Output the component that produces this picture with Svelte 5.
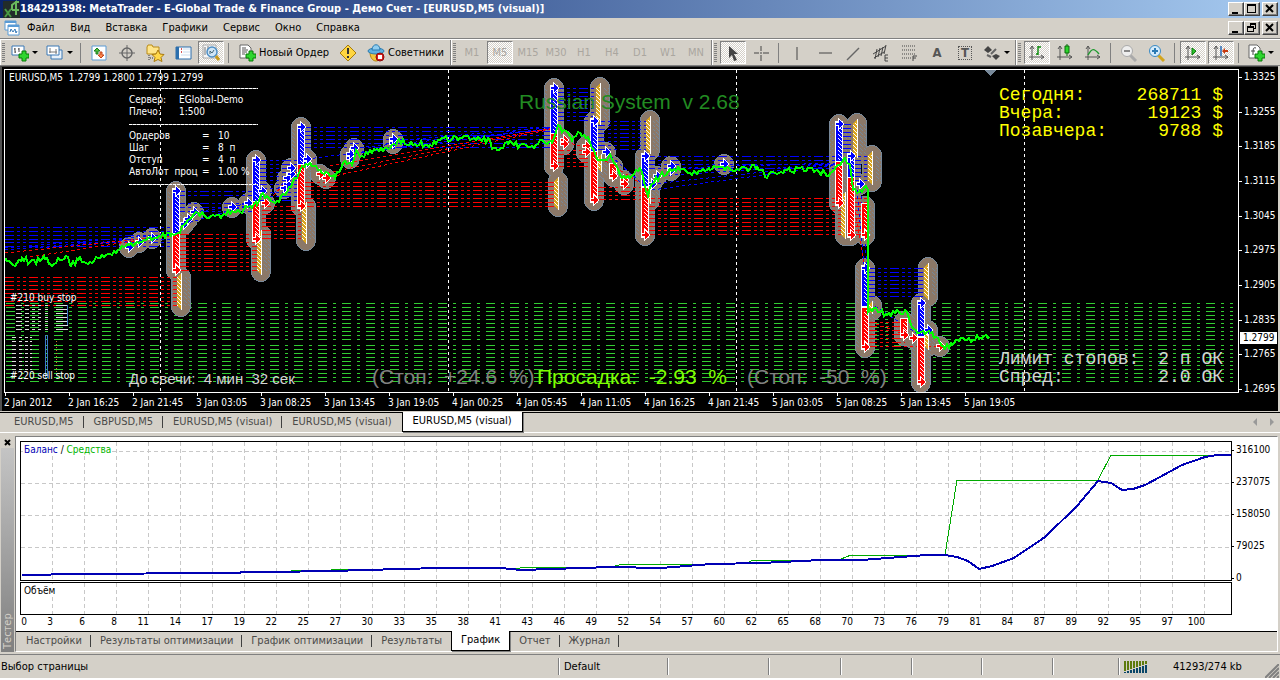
<!--
  Terminal main window: title bar, menu, toolbars, visual tester chart,
  tester report panel and status bar.
-->
<script lang="ts">
  type Row = [color: string, x1: number, x2: number, ys: number[]]
  type Column = [kind: string, x: number, y1: number, y2: number]
  type Point = [number, number]

  const menu = ['Файл', 'Вид', 'Вставка', 'Графики', 'Сервис', 'Окно', 'Справка']
  const periods = ['M1', 'M5', 'M15', 'M30', 'H1', 'H4', 'D1', 'W1', 'MN']
  const prices = ['1.3325', '1.3255', '1.3185', '1.3115', '1.3045', '1.2975', '1.2905', '1.2835', '1.2765', '1.2695']
  const times = [
    '2 Jan 2012', '2 Jan 16:25', '2 Jan 21:45', '3 Jan 03:05', '3 Jan 08:25', '3 Jan 13:45',
    '3 Jan 19:05', '4 Jan 00:25', '4 Jan 05:45', '4 Jan 11:05', '4 Jan 16:25', '4 Jan 21:45',
    '5 Jan 03:05', '5 Jan 08:25', '5 Jan 13:45', '5 Jan 19:05',
  ]
  const chartTabs = ['EURUSD,M5', 'GBPUSD,M5', 'EURUSD,M5 (visual)', 'EURUSD,M5 (visual)', 'EURUSD,M5 (visual)']
  const testerTabs = ['Настройки', 'Результаты оптимизации', 'График оптимизации', 'Результаты', 'График', 'Отчет', 'Журнал']
  const tradeNumbers = [
    0, 3, 6, 8, 11, 14, 17, 19, 22, 25, 27, 30, 33, 35, 38, 41, 43, 46, 49,
    52, 54, 57, 60, 62, 65, 68, 70, 73, 76, 79, 81, 84, 87, 89, 92, 95, 97, 100,
  ]
  const balances = ['316100', '237075', '158050', '79025', '0']
  const details = [
    ['Ордеров', '10'],
    ['Шаг', '8  п'],
    ['Отступ', '4  п'],
    ['АвтоЛот  проц', '1.00 %'],
  ]
  const profits = [
    ['Сегодня:', '268711 $'],
    ['Вчера:', '19123 $'],
    ['Позавчера:', '9788 $'],
  ]
  const limits = [
    ['Лимит стопов:', '2 п ОК'],
    ['Спред:', '2.0 ОК'],
  ]

  let chartTab = $state(4)
  let testerTab = $state(4)
  let period = $state('M5')

  function steps(from: number, to: number, by = 4) {
    const out: number[] = []
    for (let y = from; y <= to; y += by) out.push(y)
    return out
  }

  const pending = [...steps(303, 339), ...steps(345, 381)]

  const levels: Row[] = [
    ['blue', 5, 172, [227, 231, 235, 239, 242, 246]],
    ['red', 5, 177, steps(277, 305)],
    ['blue', 176, 255, [191, 195, 203, 207, 211]],
    ['red', 180, 258, steps(234, 270)],
    ['blue', 258, 302, steps(160, 200)],
    ['red', 262, 303, steps(206, 238)],
    ['blue', 302, 552, steps(127, 147)],
    ['red', 305, 556, steps(182, 206)],
    ['blue', 555, 597, steps(88, 120)],
    ['red', 555, 595, steps(150, 166)],
    ['blue', 596, 648, steps(121, 149)],
    ['red', 597, 645, steps(187, 199)],
    ['blue', 646, 840, steps(156, 168)],
    ['red', 646, 845, steps(198, 234)],
    ['blue', 842, 856, steps(124, 152)],
    ['blue', 852, 870, steps(156, 180)],
    ['red', 852, 868, steps(198, 234)],
    ['blue', 866, 925, steps(268, 296)],
    ['red', 868, 905, steps(322, 342)],
    ['red', 868, 940, [346]],
  ]

  const slopes: [string, number, number, number, number][] = [
    ['blue', 5, 248, 172, 234],
    ['blue', 5, 250, 152, 238],
    ['blue', 40, 248, 139, 241],
    ['red', 5, 253, 170, 236],
    ['red', 30, 257, 140, 240],
    ['blue', 184, 224, 256, 203],
    ['blue', 194, 212, 256, 203],
    ['blue', 232, 207, 256, 201],
    ['blue', 265, 202, 302, 164],
    ['red', 265, 204, 300, 168],
    ['blue', 307, 159, 552, 128],
    ['blue', 350, 154, 552, 128],
    ['blue', 354, 148, 552, 129],
    ['blue', 393, 141, 552, 127],
    ['red', 321, 174, 552, 128],
    ['red', 325, 178, 552, 129],
    ['red', 330, 166, 552, 128],
    ['red', 566, 142, 594, 150],
    ['blue', 606, 152, 645, 186],
    ['red', 585, 148, 645, 186],
    ['blue', 652, 184, 838, 164],
    ['blue', 652, 190, 838, 165],
    ['blue', 657, 176, 838, 164],
    ['blue', 671, 168, 838, 163],
    ['blue', 724, 164, 838, 164],
    ['blue', 860, 184, 867, 264],
    ['blue', 857, 190, 864, 264],
    ['red', 853, 200, 864, 264],
    ['blue', 870, 303, 921, 336],
    ['red', 870, 322, 921, 340],
  ]

  const columns: Column[] = [
    ['gold', 180, 277, 306],
    ['gold', 260, 234, 271],
    ['gold', 305, 206, 240],
    ['gold', 557, 181, 206],
    ['gold', 599, 87, 121],
    ['gold', 649, 120, 150],
    ['gold', 600, 158, 168],
    ['gold', 649, 188, 200],
    ['gold', 844, 196, 235],
    ['gold', 856, 123, 154],
    ['gold', 871, 155, 181],
    ['gold', 871, 305, 310],
    ['gold', 927, 267, 296],
    ['gold', 927, 332, 346],
    ['blue', 176, 191, 232],
    ['red', 176, 236, 270],
    ['blue', 256, 160, 200],
    ['red', 256, 204, 239],
    ['blue', 301, 127, 163],
    ['red', 301, 167, 206],
    ['blue', 554, 88, 132],
    ['red', 554, 136, 166],
    ['blue', 594, 121, 150],
    ['red', 594, 154, 200],
    ['blue', 645, 156, 184],
    ['red', 645, 190, 235],
    ['blue', 839, 124, 160],
    ['red', 839, 164, 203],
    ['blue', 851, 156, 176],
    ['red', 851, 180, 235],
    ['red', 865, 206, 235],
    ['blue', 865, 268, 304],
    ['red', 865, 310, 347],
    ['red', 904, 321, 335],
    ['blue', 921, 303, 334],
    ['red', 921, 340, 382],
    ['blue', 129, 247, 247],
    ['blue', 139, 242, 242],
    ['blue', 152, 238, 238],
    ['blue', 184, 224, 224],
    ['blue', 188, 219, 219],
    ['blue', 194, 212, 212],
    ['blue', 232, 207, 207],
    ['blue', 248, 203, 203],
    ['blue', 262, 191, 191],
    ['red', 265, 203, 203],
    ['blue', 284, 188, 188],
    ['blue', 287, 178, 184],
    ['blue', 291, 168, 174],
    ['blue', 307, 159, 163],
    ['red', 320, 174, 174],
    ['red', 326, 178, 178],
    ['blue', 350, 154, 158],
    ['blue', 354, 148, 148],
    ['blue', 393, 139, 143],
    ['red', 564, 140, 144],
    ['red', 586, 146, 152],
    ['blue', 606, 152, 152],
    ['red', 613, 166, 176],
    ['red', 624, 180, 184],
    ['blue', 652, 184, 184],
    ['blue', 657, 176, 176],
    ['blue', 671, 166, 170],
    ['blue', 724, 164, 164],
    ['blue', 860, 184, 184],
    ['blue', 928, 330, 330],
    ['red', 913, 338, 338],
    ['red', 940, 346, 346],
  ]

  // long columns are drawn as a hatched stack with one whole arrow at the end
  const isStack = ([, , y1, y2]: Column) => y2 - y1 > 9
  const tip = ([kind, , y1, y2]: Column) => (kind === 'red' ? y2 : y1)
  const haloX = ([kind, x]: Column) => (kind === 'gold' ? x + 1 : x)

  const arrow = 'M-3-1H0V-4L4 0 0 4V1H-3z'

  const anchors: Point[] = [
    [5, 258], [13, 265], [22, 258], [30, 262], [40, 261], [45, 259], [50, 264], [60, 260], [68, 257],
    [71, 266], [78, 260], [90, 262], [100, 258], [110, 254], [120, 249], [129, 245], [140, 242],
    [155, 238], [172, 234], [178, 233], [184, 225], [194, 214], [205, 216], [222, 216], [232, 211],
    [240, 212], [250, 206], [257, 205], [263, 193], [273, 202], [285, 195], [295, 178], [302, 166],
    [310, 163], [320, 170], [330, 176], [335, 178], [343, 163], [352, 165], [356, 150], [362, 156],
    [375, 150], [388, 149], [399, 139], [405, 144], [415, 144], [430, 145], [440, 140], [460, 138],
    [480, 139], [490, 140], [492, 149], [497, 150], [508, 144], [530, 147], [543, 141], [552, 143],
    [558, 125], [562, 132], [566, 131], [572, 141], [578, 132], [588, 137], [592, 148], [598, 160],
    [603, 160], [610, 154], [616, 165], [620, 175], [628, 176], [636, 170], [642, 172], [646, 190],
    [648, 196], [652, 184], [660, 176], [668, 172], [680, 170], [695, 172], [710, 170], [723, 167],
    [740, 169], [757, 167], [763, 170], [765, 177], [775, 173], [790, 171], [800, 168], [815, 171],
    [830, 173], [838, 165], [845, 158], [850, 165], [853, 190], [860, 190], [866, 186], [868, 190],
    [868, 312], [876, 308], [887, 315], [895, 313], [907, 312], [912, 327], [917, 333], [930, 333],
    [938, 338], [943, 346], [952, 345], [957, 340], [967, 340], [980, 338], [989, 337],
  ]

  // walk between the anchors in 2px ticks with a small repeatable noise
  function priceLine(points: Point[]) {
    let seed = 7
    const out: string[] = []
    for (let i = 0; i < points.length - 1; i++) {
      const [x1, y1] = points[i]
      const [x2, y2] = points[i + 1]
      out.push(`${x1},${y1}`)
      for (let x = x1 + 2; x < x2; x += 2) {
        seed = (seed * 1103515245 + 12345) % 2147483648
        const noise = Math.round((seed / 2147483648) * 6 - 3)
        out.push(`${x},${Math.round(y1 + ((y2 - y1) * (x - x1)) / (x2 - x1)) + noise}`)
      }
    }
    out.push(points[points.length - 1].join(','))
    return out.join(' ')
  }

  const price = priceLine(anchors)

  const balance =
    '1,133 60,132 190,131 310,129 380,127 420,126 480,126 500,128 560,126 590,125 640,126 690,122 740,121 ' +
    '800,118 840,118 880,115 905,113 924,113 936,115 947,119 958,127 971,124 993,116 1024,95 1056,64 ' +
    '1077,39 1090,41 1101,48 1112,47 1124,43 1139,35 1161,23 1184,15 1196,13 1210,13'
  const equity =
    '1,133 190,131 310,128 420,126 490,127 508,125 590,125 602,122 690,122 725,121 733,118 800,118 ' +
    '820,117 830,113 924,113 936,38 1077,38 1090,13 1200,13'
</script>

{#snippet plus()}
  <path d="M11 7h4v3h3v4h-3v3h-4v-3H8v-4h3z" fill="#2fd52f" stroke="#087a08" />
{/snippet}

{#snippet axes()}
  <path d="M4 2v14M1 13h15M2 5l2-3 2 3M13 11l3 2-3 2" fill="none" stroke="#555" />
{/snippet}

{#snippet minimize()}
  <svg width="10" height="10"><path d="M1 8h6v2H1z" /></svg>
{/snippet}

{#snippet cross()}
  <svg width="10" height="10"><path d="M1 1l7 7M8 1L1 8" stroke="#000" stroke-width="2" /></svg>
{/snippet}

<div class="app">
  <header class="title">
    <svg width="18" height="18" viewBox="0 0 18 18">
      <path d="M1 1h17v17H1z" fill="#222c2a" />
      <path d="M3 9l6 8M9 9l-6 8" stroke="#4a9b45" stroke-width="2" />
      <path d="M10 10V5l4-3v13M10 10h7M13 2h4" fill="none" stroke="#6abb5d" stroke-width="2" />
    </svg>
    <h1>184291398: MetaTrader - E-Global Trade &amp; Finance Group - Демо Счет - [EURUSD,M5 (visual)]</h1>
    <div class="window-buttons">
      <button aria-label="Свернуть">{@render minimize()}</button>
      <button aria-label="Развернуть">
        <svg width="10" height="10"><path d="M0 0h9v9H0zM1 2v6h7V2z" fill-rule="evenodd" /></svg>
      </button>
      <button class="close" aria-label="Закрыть">{@render cross()}</button>
    </div>
  </header>

  <nav class="menu">
    <svg width="16" height="16" viewBox="0 0 16 16">
      <path d="M1 1h11v9H1z" fill="#fff" stroke="#5a9bd5" />
      <path d="M1 1h11v2H1z" fill="#5a9bd5" />
      <path d="M4 5h11v10H4z" fill="#fff" stroke="#5a9bd5" />
      <path d="M4 5h11v2H4z" fill="#5a9bd5" />
      <path d="M6 12l1-3 2 3 2-3 1 4 1-2" fill="none" stroke="#3579b8" />
    </svg>
    {#each menu as item (item)}
      <button class="menu-item">{item}</button>
    {/each}
    <div class="window-buttons">
      <button aria-label="Свернуть окно">{@render minimize()}</button>
      <button aria-label="Восстановить окно">
        <svg width="10" height="10">
          <path d="M3 0h6v6H7V5h1V2H4v1H3zM0 3h7v6H0zM1 5v3h5V5z" fill-rule="evenodd" />
        </svg>
      </button>
      <button class="close" aria-label="Закрыть окно">{@render cross()}</button>
    </div>
  </nav>

  <div class="toolbars">
    <div class="band">
      <i class="grip"></i>
      <button class="tool drop" aria-label="Новый график">
        <svg width="18" height="18" viewBox="0 0 18 18">
          <path d="M1 2h12v9H1z" fill="#fff" stroke="#3b78b5" />
          <path d="M4 4v5M3 5h1M4 8h1M8 4v4M7 5h1" stroke="#444" />
          {@render plus()}
        </svg>
        <b class="caret"></b>
      </button>
      <button class="tool drop" aria-label="Профили">
        <svg width="18" height="18" viewBox="0 0 18 18">
          <path d="M5 6h11v9H5z" fill="#e8f1fa" stroke="#3b78b5" />
          <path d="M1 2h12v9H1z" fill="#fff" stroke="#3b78b5" />
          <path d="M4 4v5M3 8h8M10 5v5" stroke="#777" fill="none" />
        </svg>
        <b class="caret"></b>
      </button>
      <i class="sep"></i>
      <button class="tool" aria-label="Обзор рынка">
        <svg width="18" height="18" viewBox="0 0 18 18">
          <path d="M2 2h14v14H2z" fill="#fff" stroke="#5b9bd5" />
          <path d="M7 4l3 3H8v3H6V7H4z" fill="#4cc23c" stroke="#1c7a1c" />
          <path d="M11 14l-3-3h2V8h2v3h2z" fill="#ff8a50" stroke="#c2451c" />
        </svg>
      </button>
      <button class="tool" aria-label="Окно данных">
        <svg width="18" height="18" viewBox="0 0 18 18" fill="none" stroke="#666">
          <circle cx="9" cy="9" r="5" stroke-width="1.4" /><path d="M9 1v16M1 9h16" />
        </svg>
      </button>
      <button class="tool" aria-label="Навигатор">
        <svg width="20" height="18" viewBox="0 0 20 18">
          <path d="M2 3l1-2h4l1 2h6v7H2z" fill="#ffe58a" stroke="#b98b16" />
          <path d="M4 11v6M5 14h3" stroke="#333" stroke-dasharray="1 1" />
          <path d="M13 6l2 4 4 .5-3 3 1 4-4-2-4 2 1-4-3-3 4-.5z" fill="#ffd84a" stroke="#a8780c" />
        </svg>
      </button>
      <button class="tool" aria-label="Терминал">
        <svg width="18" height="18" viewBox="0 0 18 18">
          <path d="M2 3h15v12H2z" fill="#fff" stroke="#2c6fad" />
          <path d="M2 3h3v12H2z" fill="#2c6fad" />
          <path d="M7 5h1M7 8h1" stroke="#c22" stroke-width="1.4" />
          <path d="M9 5h7M9 8h7M7 11h9" stroke="#cde" />
        </svg>
      </button>
      <button class="tool pressed" aria-label="Тестер">
        <svg width="18" height="18" viewBox="0 0 18 18">
          <path d="M1 1h13v13H1z" fill="#f7f7f7" stroke="#aaa" />
          <path d="M3 3v8M6 2v9" stroke="#777" />
          <circle cx="10" cy="8" r="5" fill="#cfe5f6" stroke="#4d8ec4" stroke-width="1.5" />
          <path d="M8 10V7l2 2 2-3" fill="none" stroke="#467" />
          <path d="M14 12l3 4" stroke="#c79a1b" stroke-width="3" />
        </svg>
      </button>
      <i class="sep"></i>
      <button class="tool wide">
        <svg width="18" height="18" viewBox="0 0 18 18">
          <path d="M2 1h8l3 3v10H2z" fill="#fff" stroke="#666" />
          <path d="M4 4h4M4 6h6M4 8h5M4 10h3" stroke="#555" />
          {@render plus()}
        </svg>
        Новый Ордер
      </button>
      <button class="tool" aria-label="Редактор">
        <svg width="18" height="18" viewBox="0 0 18 18">
          <path d="M9 1l8 8-8 8-8-8z" fill="#ffd640" stroke="#a87c0a" />
          <path d="M9 4v6M9 12v2" stroke="#333" stroke-width="2" />
        </svg>
      </button>
      <button class="tool wide">
        <svg width="18" height="18" viewBox="0 0 18 18">
          <path d="M3 8c0 6 3 9 6 9s6-3 6-9z" fill="#f3c53a" stroke="#b5830d" />
          <ellipse cx="9" cy="7" rx="8" ry="3" fill="#5fb0e0" stroke="#2b7bb0" />
          <path d="M5 6c0-7 8-7 8 0z" fill="#8fcdf0" stroke="#2b7bb0" />
          <circle cx="13" cy="13" r="4" fill="#d81e1e" stroke="#8c0d0d" /><path d="M11 11h4v4h-4z" fill="#fff" />
        </svg>
        Советники
      </button>
    </div>

    <div class="band">
      <i class="grip"></i>
      {#each periods as p (p)}
        <button class="tool period" class:pressed={p === period} onclick={() => (period = p)}>{p}</button>
      {/each}
    </div>

    <div class="band">
      <i class="grip"></i>
      <button class="tool pressed" aria-label="Курсор">
        <svg width="18" height="18" viewBox="0 0 18 18"><path d="M5 2l9 8H10l3 6-3 1-2-6-3 3z" fill="#444" /></svg>
      </button>
      <button class="tool" aria-label="Перекрестие">
        <svg width="18" height="18" viewBox="0 0 18 18"><path d="M9 2v5M9 11v6M2 9h5M11 9h6M9 8v2" stroke="#444" /></svg>
      </button>
      <i class="sep"></i>
      <button class="tool" aria-label="Вертикальная линия">
        <svg width="18" height="18" viewBox="0 0 18 18"><path d="M9 3v13" stroke="#444" /></svg>
      </button>
      <button class="tool" aria-label="Горизонтальная линия">
        <svg width="18" height="18" viewBox="0 0 18 18"><path d="M3 9h13" stroke="#444" /></svg>
      </button>
      <button class="tool" aria-label="Трендовая линия">
        <svg width="18" height="18" viewBox="0 0 18 18"><path d="M3 16L15 4" stroke="#666" stroke-width="1.4" /></svg>
      </button>
      <button class="tool" aria-label="Канал">
        <svg width="18" height="18" viewBox="0 0 18 18" stroke="#444">
          <path d="M1 10L14 2M2 14L12 8M5 5L3 15M8 4L6 13M11 3L9 12M14 1l-2 9" />
          <path d="M16 11h-3v6h3M13 14h3" fill="none" />
        </svg>
      </button>
      <button class="tool" aria-label="Линии Фибоначчи">
        <svg width="18" height="18" viewBox="0 0 18 18" stroke="#444">
          <path d="M2 2h14M2 6h14M2 10h14M2 14h9" stroke-dasharray="1 1" />
          <path d="M17 12h-4v5M13 14h3" fill="none" />
        </svg>
      </button>
      <button class="tool letter">A</button>
      <button class="tool letter"><span class="boxed">T</span></button>
      <button class="tool drop" aria-label="Стрелки">
        <svg width="18" height="18" viewBox="0 0 18 18" fill="#444">
          <path d="M5 2l4 4-4 3-4-3zM13 16l-4-4 4-2 4 2z" /><path d="M8 10l5-5M4 11l4 2" stroke="#666" stroke-width="2" />
        </svg>
        <b class="caret"></b>
      </button>
    </div>

    <div class="band last">
      <i class="grip"></i>
      <button class="tool pressed" aria-label="Бары">
        <svg width="18" height="18" viewBox="0 0 18 18">
          {@render axes()}
          <path d="M10 2v9M10 3h3M8 10h2" stroke="#0a8a0a" stroke-width="1.4" />
        </svg>
      </button>
      <button class="tool" aria-label="Свечи">
        <svg width="18" height="18" viewBox="0 0 18 18">
          {@render axes()}
          <path d="M11 0v12" stroke="#0a6a0a" /><path d="M9 2h4v7H9z" fill="#2bd52b" stroke="#0a6a0a" />
        </svg>
      </button>
      <button class="tool" aria-label="Линия">
        <svg width="18" height="18" viewBox="0 0 18 18">
          {@render axes()}
          <path d="M4 11c4-7 6-7 11-1" fill="none" stroke="#1f9a2f" stroke-width="1.4" />
        </svg>
      </button>
      <i class="sep"></i>
      <button class="tool" aria-label="Уменьшить">
        <svg width="18" height="18" viewBox="0 0 18 18">
          <path d="M10 11l6 6" stroke="#aaa" stroke-width="3" />
          <circle cx="7" cy="7" r="5.5" fill="#eee" stroke="#aaa" /><path d="M4 7h6" stroke="#888" stroke-width="2" />
        </svg>
      </button>
      <button class="tool" aria-label="Увеличить">
        <svg width="18" height="18" viewBox="0 0 18 18">
          <path d="M10 11l6 6" stroke="#d3a51c" stroke-width="3" />
          <circle cx="7" cy="7" r="5.5" fill="#d4ebfb" stroke="#3a8ac4" />
          <path d="M4 7h6M7 4v6" stroke="#2a7ab4" stroke-width="2" />
        </svg>
      </button>
      <i class="sep"></i>
      <button class="tool pressed" aria-label="Автопрокрутка">
        <svg width="18" height="18" viewBox="0 0 18 18">
          {@render axes()}
          <path d="M8 4l4 3-4 4z" fill="#2bc52b" stroke="#0a7a0a" />
        </svg>
      </button>
      <button class="tool pressed" aria-label="Сдвиг графика">
        <svg width="18" height="18" viewBox="0 0 18 18">
          {@render axes()}
          <path d="M9 2v10" stroke="#2a6ab4" stroke-width="1.5" />
          <path d="M10 7l3-3v2h3v2h-3v2z" fill="#c8390f" />
        </svg>
      </button>
      <i class="sep"></i>
      <button class="tool drop" aria-label="Индикаторы">
        <svg width="18" height="18" viewBox="0 0 18 18">
          <path d="M2 1h8l3 3v10H2z" fill="#fff" stroke="#666" />
          <path d="M9 4c-3-1-3 1-3 7M4 7h4" fill="none" stroke="#444" />
          {@render plus()}
        </svg>
        <b class="caret"></b>
      </button>
    </div>
  </div>

  <main class="chart">
    <div class="plot">
      <svg class="canvas" shape-rendering="crispEdges">
        <defs>
          <pattern id="scales" width="4" height="4" patternUnits="userSpaceOnUse">
            <path d="M0 0h1v1H0zM1 1h1v1H1zM2 2h1v1H2z" fill="#778899" />
          </pattern>
          <pattern id="ticks" width="4" height="4" patternUnits="userSpaceOnUse">
            <path d="M0 0h1v1H0zM1 1h1v1H1zM2 2h1v1H2zM3 3h1v1H3z" fill="#fff" />
          </pattern>
        </defs>
        <g transform="translate(-5 -70)">
          {#each pending as y (y)}
            <line x1="6" x2="100%" y1={y} y2={y} class="pending" />
          {/each}
          {#each [160, 448, 736, 1024] as x (x)}
            <line x1={x} x2={x} y1="70" y2="392" class="period-line" />
          {/each}
          {#each columns as c}
            <line x1={haloX(c)} x2={haloX(c)} y1={c[2]} y2={c[3] + 1} class="halo" />
          {/each}
          {#each columns as c}
            <line x1={haloX(c)} x2={haloX(c)} y1={c[2]} y2={c[3] + 1} class="halo body" />
          {/each}
          {#each columns as c}
            {#if isStack(c)}
              <rect x={c[1] + 4} y={c[2]} width="6" height={c[3] - c[2]} fill="url(#scales)" />
              <rect x={c[1] - 9} y={c[2]} width="3" height={c[3] - c[2]} fill="url(#scales)" />
            {/if}
          {/each}
          {#each levels as [color, x1, x2, ys]}
            {#each ys as y (y)}
              <line {x1} {x2} y1={y} y2={y} stroke={color} class="level" />
            {/each}
          {/each}
          {#each slopes as [color, x1, y1, x2, y2]}
            <line {x1} {y1} {x2} {y2} stroke={color} class="slope" />
          {/each}
          {#each columns as c}
            {@const [kind, x, y1, y2] = c}
            {#if kind === 'gold'}
              <path d="M{x + 2} {y1 - 4}V{y2 + 4}L{x - 3} {y2}V{y1}z" class="gold" />
              <rect x={x - 3} y={y1} width="4" height={y2 - y1} fill="url(#ticks)" />
              <rect x={x + 1} y={y1 - 4} width="1" height={y2 - y1 + 8} fill="#fff" />
            {:else}
              {#if isStack(c)}
                <rect x={x - 4} y={y1 - 3} width="8" height={y2 - y1 + 6} fill="#fff" />
                <rect x={x - 3} y={y1 - 2} width="6" height={y2 - y1 + 4} class={kind} />
                <rect x={x - 1} y={y1} width="4" height={y2 - y1} fill="url(#ticks)" />
              {:else if y2 > y1}
                <path d={arrow} transform="translate({x} {kind === 'red' ? y1 : y2})" class="mark {kind}" />
              {/if}
              <path d={arrow} transform="translate({x} {tip(c)})" class="mark {kind}" />
            {/if}
          {/each}
          <g class="hidden-orders">
            {#each steps(305, 329, 4) as y (y)}
              <path d="M16 {y}h6m3 0h4m3 0h3m3 0h3m4 0h3m8 0h12" />
            {/each}
            {#each steps(337, 369, 4) as y (y)}
              <path d="M12 {y}h4m3 0h3m3 0h3m2 0h2" />
            {/each}
          </g>
          <path d="M45 335v43M47 335v43M67 305v20" stroke="#3c78c8" />
          <path d="M56 341v34" stroke="#c87828" stroke-dasharray="1 2" />
          <polyline points={price} class="price" />
          <path d="M984 70h12l-6 6z" fill="#778899" />
        </g>
      </svg>

      <p class="quote">EURUSD,M5&nbsp; 1.2799 1.2800 1.2799 1.2799</p>
      <section class="info">
        <hr />
        <dl>
          <dt>Сервер:</dt><dd>EGlobal-Demo</dd>
          <dt>Плечо:</dt><dd>1:500</dd>
        </dl>
        <hr />
        <dl class="details">
          {#each details as [name, value] (name)}
            <dt>{name}</dt><dd>=</dd><dd>{value}</dd>
          {/each}
        </dl>
        <hr />
      </section>
      <h2 class="system">Russian System&nbsp; v 2.68</h2>
      <dl class="stats profits">
        {#each profits as [name, value] (name)}
          <div><dt>{name}</dt><dd>{value}</dd></div>
        {/each}
      </dl>
      <dl class="stats limits">
        {#each limits as [name, value] (name)}
          <div><dt>{name}</dt><dd>{value}</dd></div>
        {/each}
      </dl>
      <p class="order buy">#210 buy stop</p>
      <p class="order sell">#220 sell stop</p>
      <p class="candle">До свечи:&nbsp; 4 мин&nbsp; 32 сек</p>
      <p class="drawdown stop-up">(Стоп:&nbsp; +24.6&nbsp; %)</p>
      <p class="drawdown current">Просадка:&nbsp; -2.93&nbsp; %</p>
      <p class="drawdown stop-down">(Стоп:&nbsp; -50&nbsp; %)</p>
    </div>
    <div class="price-axis">
      {#each prices as p (p)}
        <span>{p}</span>
      {/each}
      <strong class="bid">1.2799</strong>
    </div>
    <div class="time-axis">
      {#each times as t (t)}
        <span>{t}</span>
      {/each}
    </div>
  </main>

  <div class="tabs chart-tabs" role="tablist">
    {#each chartTabs as label, i}
      <button
        role="tab"
        class="tab"
        class:active={i === chartTab}
        aria-selected={i === chartTab}
        onclick={() => (chartTab = i)}
      >
        {label}
      </button>
    {/each}
    <svg class="scroll" width="24" height="10" fill="#999"><path d="M5 1v8L1 5zM18 1v8l4-4z" /></svg>
  </div>

  <section class="tester">
    <aside>
      <button class="hide" aria-label="Закрыть тестер">
        <svg width="7" height="7"><path d="M1 1l5 5M6 1L1 6" stroke="#000" stroke-width="2" /></svg>
      </button>
      <span class="side-title">Тестер</span>
    </aside>
    <div class="panel">
      <div class="report">
        <div class="graph">
          <svg viewBox="0 0 1210 138" preserveAspectRatio="none">
            {#each tradeNumbers.slice(1) as n, i (n)}
              <line x1={32 * i + 31} x2={32 * i + 31} y1="0" y2="138" class="grid" />
            {/each}
            {#each [9, 41, 73, 105] as y (y)}
              <line x1="0" x2="1210" y1={y} y2={y} class="grid" />
            {/each}
            <polyline points={equity} class="equity" />
            <polyline points={balance} class="balance" />
          </svg>
          <p class="legend"><span class="b">Баланс</span> / <span class="e">Средства</span></p>
        </div>
        <div class="scale">
          {#each balances as b (b)}
            <span>{b}</span>
          {/each}
        </div>
        <div class="volume">
          <svg viewBox="0 0 1210 31" preserveAspectRatio="none">
            {#each tradeNumbers.slice(1) as n, i (n)}
              <line x1={32 * i + 31} x2={32 * i + 31} y1="0" y2="31" class="grid" />
            {/each}
          </svg>
          <p class="legend">Объём</p>
        </div>
        <div class="numbers">
          {#each tradeNumbers as n (n)}
            <span>{n}</span>
          {/each}
        </div>
      </div>
      <div class="tabs" role="tablist">
        {#each testerTabs as label, i (label)}
          <button
            role="tab"
            class="tab"
            class:active={i === testerTab}
            aria-selected={i === testerTab}
            onclick={() => (testerTab = i)}
          >
            {label}
          </button>
        {/each}
      </div>
    </div>
  </section>

  <footer class="status">
    <span class="hint">Выбор страницы</span>
    <span class="profile">Default</span>
    <span class="w101"></span>
    <span class="w72"></span>
    <span class="w71"></span>
    <span class="w70"></span>
    <span class="w71"></span>
    <span class="w66"></span>
    <span class="traffic">
      <svg width="24" height="12" shape-rendering="crispEdges">
        {#each [0, 1, 2, 3, 4, 5, 6, 7] as i (i)}
          <rect x={i * 3} y="0" width="2" height={10 - i} fill="#5d7a0c" />
          <rect x={i * 3} y={11 - i} width="2" height={i + 1} fill="#0a4668" />
        {/each}
      </svg>
      41293/274 kb
    </span>
    <svg class="resize" width="14" height="14">
      <path d="M0 14L14 0M4 14L14 4M8 14l6-6M12 14l2-2" stroke="#808080" stroke-width="2" />
    </svg>
  </footer>
</div>

<style>
  :global(body) {
    background: #d4d0c8;
  }
  .app {
    --face: #d4d0c8;
    --shadow: #808080;
    background: var(--face);
    color: #000;
    font: 11px/14px 'DejaVu Sans Condensed', 'DejaVu Sans', sans-serif;
    overflow: hidden;
  }
  .app :is(p, h1, h2, dl, dd) {
    margin: 0;
  }
  button {
    border: 0;
    padding: 0;
    background: none;
    color: inherit;
    font: inherit;
  }
  svg {
    display: block;
    flex: none;
  }

  .title {
    display: flex;
    align-items: center;
    height: 18px;
    padding: 0 2px;
    background: linear-gradient(90deg, #0a246a, #a6caf0);
    color: #fff;
  }
  .title h1 {
    font-size: 11px;
    line-height: 18px;
    font-weight: bold;
    white-space: nowrap;
  }
  .window-buttons {
    display: flex;
    margin-left: auto;
  }
  .window-buttons button {
    display: grid;
    place-items: center;
    box-sizing: border-box;
    width: 16px;
    height: 14px;
    background: var(--face);
    border: 1px solid;
    border-color: #fff #404040 #404040 #fff;
    box-shadow: inset -1px -1px var(--shadow);
  }
  .window-buttons .close {
    margin-left: 2px;
  }
  .menu {
    display: flex;
    align-items: center;
    height: 20px;
    padding: 0 2px 0 4px;
    border-bottom: 1px solid var(--shadow);
  }
  .menu-item {
    padding: 0 8px 0 7px;
  }
  .menu svg + .menu-item {
    padding-right: 9px;
  }

  .toolbars {
    display: flex;
    height: 25px;
    border-top: 1px solid #fff;
    border-bottom: 1px solid var(--shadow);
  }
  .band {
    display: flex;
    align-items: center;
    flex: none;
    padding-right: 1px;
    border-right: 1px solid var(--shadow);
    box-shadow: inset 1px 0 #fff;
  }
  .band.last {
    flex: 1;
    border-right: 0;
  }
  .grip {
    width: 3px;
    height: 19px;
    margin: 0 2px;
    background: repeating-linear-gradient(var(--shadow) 0 1px, var(--face) 1px 2px);
  }
  .sep {
    width: 1px;
    height: 20px;
    margin: 0 4px 0 3px;
    background: var(--shadow);
  }
  .tool {
    display: flex;
    align-items: center;
    justify-content: center;
    box-sizing: border-box;
    width: 28px;
    height: 23px;
    white-space: nowrap;
  }
  .tool.pressed {
    width: 26px;
    margin: 0 1px;
    border: 1px solid;
    border-color: var(--shadow) #fff #fff var(--shadow);
    background: repeating-conic-gradient(#fff 0 25%, var(--face) 0 50%) 0 0 / 2px 2px;
  }
  .tool.drop {
    width: 35px;
    gap: 3px;
  }
  .tool.wide {
    width: auto;
    gap: 3px;
    padding: 0 5px;
  }
  .period {
    color: #aaa69f;
  }
  .letter {
    color: #555;
    font-size: 13px;
    font-weight: bold;
  }
  .boxed {
    padding: 0 2px;
    border: 1px dotted #555;
    line-height: 12px;
  }
  .caret {
    border: 3px solid transparent;
    border-top-color: #000;
    border-bottom: 0;
  }

  .chart {
    display: grid;
    grid-template-columns: 1fr 39px;
    grid-template-rows: 324px 17px;
    padding: 2px 0 1px 2px;
    margin-right: 2px;
    border-left: 2px solid #505050;
    border-top: 1px solid #404040;
    background: #000;
    color: #fff;
    font-size: 10px;
  }
  .plot {
    position: relative;
    min-width: 0;
    border: 1px solid #fff;
    overflow: hidden;
  }
  .canvas {
    width: 100%;
    height: 322px;
  }
  .pending {
    stroke: #32cd32;
    stroke-dasharray: 9 6 3 6;
  }
  .period-line {
    stroke: #fff;
    stroke-dasharray: 3 3;
  }
  .level {
    stroke-dasharray: 9 3 3 3 3 3;
  }
  .slope {
    stroke-dasharray: 3 3;
  }
  .halo {
    stroke: #778899;
    stroke-width: 20px;
    stroke-linecap: round;
  }
  .halo.body {
    stroke: #8b7868;
    stroke-width: 18px;
  }
  .mark {
    stroke: #fff;
    stroke-width: 2px;
    paint-order: stroke;
  }
  .blue {
    fill: #00f;
  }
  .red {
    fill: #f00;
  }
  .gold {
    fill: #daa520;
  }
  .hidden-orders {
    fill: none;
    stroke: #e0e0e0;
  }
  .price {
    fill: none;
    stroke: #0f0;
    stroke-width: 2px;
  }

  .plot p,
  .plot h2,
  .plot dl.stats,
  .info {
    position: absolute;
    white-space: nowrap;
  }
  .quote {
    left: 4px;
    top: 1px;
  }
  .info {
    left: 124px;
    top: 18px;
    width: 129px;
  }
  .info hr {
    height: 1px;
    margin: 0 0 5px;
    border: 0;
    background: repeating-linear-gradient(90deg, #fff 0 3px, #999 3px 4px);
  }
  .info dl {
    display: grid;
    grid-template-columns: 50px 1fr;
    line-height: 12px;
    margin-bottom: 6px;
  }
  .info dl.details {
    grid-template-columns: 73px 16px 1fr;
    white-space: pre;
  }
  .system {
    left: 514px;
    top: 20px;
    color: #228b22;
    font: 21px/24px 'Liberation Sans', Arial, sans-serif;
  }
  .stats {
    right: 15px;
    width: 224px;
    font: 18px/18px 'Liberation Mono', 'Courier New', monospace;
  }
  .stats div {
    display: flex;
    justify-content: space-between;
  }
  .profits {
    top: 16px;
    color: #ff0;
  }
  .limits {
    top: 280px;
    color: #d3d3d3;
  }
  .order {
    left: 5px;
    line-height: 12px;
  }
  .order.buy {
    top: 222px;
  }
  .order.sell {
    top: 300px;
  }
  .candle {
    left: 124px;
    top: 300px;
    color: #d3d3d3;
    font: 15px/18px 'Liberation Sans', Arial, sans-serif;
  }
  .drawdown {
    top: 295px;
    color: #808080;
    font: 21px/24px 'Liberation Sans', Arial, sans-serif;
  }
  .stop-up {
    left: 367px;
  }
  .current {
    left: 532px;
    color: #7fff00;
  }
  .stop-down {
    left: 742px;
  }
  .price-axis {
    position: relative;
    display: flex;
    flex-direction: column;
    justify-content: space-between;
    height: 326px;
    margin-top: 1px;
  }
  .price-axis span::before {
    content: '';
    float: left;
    width: 3px;
    height: 1px;
    margin: 7px 2px 0 0;
    background: #fff;
  }
  .bid {
    position: absolute;
    left: 1px;
    top: 262px;
    padding: 0 3px;
    line-height: 12px;
    background: #fff;
    color: #000;
    font-weight: normal;
  }
  .time-axis {
    grid-column: 1 / -1;
    display: flex;
    overflow: hidden;
  }
  .time-axis span {
    flex: none;
    width: 64px;
    white-space: nowrap;
    line-height: 13px;
  }
  .time-axis span::before {
    content: '';
    display: block;
    width: 1px;
    height: 3px;
    margin-left: 1px;
    background: #fff;
  }

  .tabs {
    display: flex;
    height: 19px;
    border-top: 1px solid #000;
  }
  .chart-tabs {
    margin-top: 1px;
    border-bottom: 1px solid #fff;
    padding-left: 4px;
  }
  .tab {
    position: relative;
    padding: 0 10px 2px;
    color: #4a4a48;
    white-space: nowrap;
  }
  .tab::after {
    content: '';
    position: absolute;
    right: 0;
    top: 3px;
    width: 1px;
    height: 12px;
    background: #404040;
  }
  .tab.active {
    margin-top: -1px;
    padding-top: 1px;
    background: #fff;
    color: #000;
    border: 1px solid #000;
    border-top: 0;
    box-shadow: 1px 1px var(--shadow);
  }
  .tab.active::after,
  .tab:has(+ .active)::after {
    display: none;
  }
  .scroll {
    margin: 4px 4px 0 auto;
  }

  .tester {
    display: grid;
    grid-template-columns: 15px 1fr;
    margin: 3px 2px 3px 0;
    height: 215px;
  }
  aside {
    display: flex;
    flex-direction: column;
    padding: 0 1px;
  }
  .hide {
    height: 12px;
    display: grid;
    place-items: center;
  }
  .side-title {
    flex: 1;
    padding: 3px 0;
    color: #d4d0c8;
    line-height: 13px;
    writing-mode: vertical-rl;
    transform: rotate(180deg);
    background: linear-gradient(#808080, #c4c4c4);
  }
  .panel {
    min-width: 0;
    border: 1px solid;
    border-color: var(--shadow) #fff #fff var(--shadow);
  }
  .report {
    display: grid;
    grid-template-columns: 1fr 45px;
    align-content: start;
    padding: 4px 0 0 4px;
    height: 190px;
    background: #fff;
    font-size: 10px;
  }
  .graph,
  .volume {
    position: relative;
    border: 1px solid #000;
  }
  .graph {
    height: 138px;
  }
  .graph svg {
    width: 100%;
    height: 138px;
  }
  .volume {
    margin-top: 1px;
    grid-column: 1;
  }
  .volume svg {
    width: 100%;
    height: 31px;
  }
  .grid {
    stroke: #c8c8c8;
    stroke-dasharray: 4 3;
    shape-rendering: crispEdges;
  }
  .equity,
  .balance {
    fill: none;
    stroke: #00aa00;
    vector-effect: non-scaling-stroke;
    shape-rendering: crispEdges;
  }
  .balance {
    stroke: #0000b4;
    stroke-width: 2px;
  }
  .legend {
    position: absolute;
    left: 2px;
    top: 1px;
    padding: 0 1px;
    line-height: 13px;
    background: #fff;
  }
  .legend .b {
    color: #0000b4;
  }
  .legend .e {
    color: #00b400;
  }
  .scale {
    display: flex;
    flex-direction: column;
    justify-content: space-between;
    height: 142px;
    margin: 2px 0 -4px;
  }
  .scale span::before {
    content: '';
    float: left;
    width: 2px;
    height: 1px;
    margin: 7px 2px 0 0;
    background: #000;
  }
  .numbers {
    grid-column: 1 / -1;
    display: flex;
    overflow: hidden;
  }
  .numbers span {
    flex: none;
    width: 32px;
    text-align: right;
  }
  .numbers span:first-child {
    width: 7px;
    margin-right: -6px;
  }
  .panel .tabs {
    padding-left: 1px;
  }
  .panel .tab {
    padding-inline: 9px;
  }

  .status {
    display: flex;
    align-items: center;
    box-sizing: border-box;
    height: 26px;
    padding: 0 1px;
    border-top: 1px solid var(--shadow);
    border-bottom: 2px solid #fff;
  }
  .status span {
    box-sizing: border-box;
    height: 17px;
    line-height: 17px;
    border-left: 1px solid var(--shadow);
    box-shadow: inset 1px 0 #fff;
  }
  .status .hint {
    flex: 1;
    border: 0;
    box-shadow: none;
  }
  .status .profile {
    width: 109px;
    padding-left: 5px;
  }
  .w101 {
    width: 101px;
  }
  .w72 {
    width: 72px;
  }
  .w71 {
    width: 71px;
  }
  .w70 {
    width: 70px;
  }
  .w66 {
    width: 66px;
  }
  .status .traffic {
    display: flex;
    align-items: center;
    gap: 25px;
    width: 147px;
    padding-left: 5px;
    white-space: nowrap;
  }
  .resize {
    align-self: flex-end;
  }
</style>
